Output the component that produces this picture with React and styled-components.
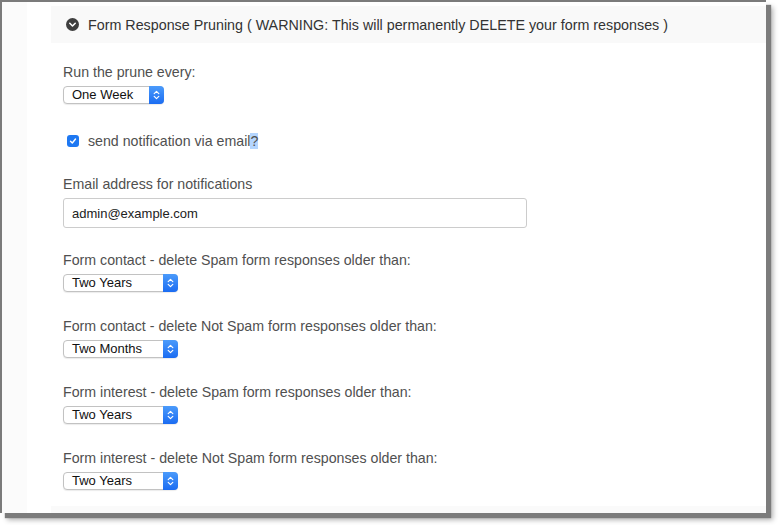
import React from "react";
import styled, { createGlobalStyle } from "styled-components";

const GlobalStyle = createGlobalStyle`
  html, body {
    margin: 0;
    padding: 0;
    background: #ffffff;
  }
  body {
    font-family: "Liberation Sans", Helvetica, Arial, sans-serif;
  }
`;

const Page = styled.div`
  width: 779px;
  height: 525px;
  background: #ffffff;
`;

const Window = styled.div`
  box-sizing: border-box;
  width: 766px;
  height: 513px;
  border-top: 2px solid #7b7b7b;
  border-left: 2px solid #7b7b7b;
  background: #ffffff;
  box-shadow: 5px 5px 1px #7c7c7c, 7px 7px 5px rgba(0, 0, 0, 0.3);
  display: flex;
  overflow: hidden;
`;

const Gutter = styled.div`
  width: 25px;
  flex-shrink: 0;
  background: #fbfbfb;
`;

const Main = styled.div`
  flex: 1;
  display: flex;
  flex-direction: column;
  padding: 4px 0 0 24px;
  min-width: 0;
`;

const PanelHeader = styled.div`
  display: flex;
  align-items: center;
  gap: 9px;
  height: 37px;
  flex-shrink: 0;
  padding-left: 15px;
  background: #f9f9f9;
  color: #333333;
  font-size: 14.3px;
`;

const ToggleIcon = styled.svg`
  width: 13px;
  height: 13px;
  display: block;
`;

const Body = styled.div`
  padding: 19px 0 16px 12px;
  display: flex;
  flex-direction: column;
`;

const Field = styled.div`
  display: flex;
  flex-direction: column;
  align-items: flex-start;
  gap: 4px;
  margin-top: ${(p) => p.$top || 0}px;
`;

const Label = styled.label`
  font-size: 14.2px;
  line-height: 20px;
  color: #505050;
`;

const SelectBox = styled.div`
  box-sizing: border-box;
  width: ${(p) => p.$width}px;
  height: 18px;
  display: flex;
  border: 1px solid #c2c2c2;
  border-radius: 4px;
  background: #ffffff;
  box-shadow: 0 1px 1px rgba(0, 0, 0, 0.08);
`;

const SelectValue = styled.span`
  flex: 1;
  padding-left: 8px;
  font-size: 13px;
  line-height: 16px;
  color: #111;
`;

const Stepper = styled.span`
  width: 15px;
  margin: -1px -1px -1px 0;
  border-radius: 0 4px 4px 0;
  background: linear-gradient(#4b9bfb, #1b6cf2);
  display: flex;
  align-items: center;
  justify-content: center;
`;

const CheckRow = styled.div`
  display: flex;
  align-items: center;
  gap: 9px;
  height: 20px;
  padding-left: 4px;
  margin-top: ${(p) => p.$top || 0}px;
  font-size: 14.2px;
  color: #505050;
`;

const CheckBox = styled.span`
  width: 12px;
  height: 12px;
  border-radius: 3px;
  background: #1e78f2;
  display: flex;
  align-items: center;
  justify-content: center;
`;

const Highlight = styled.span`
  background: #b4d5fe;
`;

const TextInput = styled.div`
  box-sizing: border-box;
  width: 464px;
  height: 30px;
  display: flex;
  align-items: center;
  padding-left: 8px;
  border: 1px solid #cccccc;
  border-radius: 3px;
  font-size: 13px;
  color: #222;
`;

const NextPanel = styled.div`
  height: 37px;
  flex-shrink: 0;
  background: #fafafa;
`;

const Select = ({ value, width }) => (
  <SelectBox $width={width}>
    <SelectValue>{value}</SelectValue>
    <Stepper>
      <svg width="7" height="10" viewBox="0 0 7 10">
        <path d="M1.2 3.6 L3.5 1.4 L5.8 3.6 M1.2 6.4 L3.5 8.6 L5.8 6.4" fill="none" stroke="#fff" strokeWidth="1.2" strokeLinecap="round" strokeLinejoin="round" />
      </svg>
    </Stepper>
  </SelectBox>
);

const rules = [
  { label: "Form contact - delete Spam form responses older than:", value: "Two Years", top: 22 },
  { label: "Form contact - delete Not Spam form responses older than:", value: "Two Months", top: 24 },
  { label: "Form interest - delete Spam form responses older than:", value: "Two Years", top: 24 },
  { label: "Form interest - delete Not Spam form responses older than:", value: "Two Years", top: 24 },
];

export default function App() {
  return (
    <Page>
      <GlobalStyle />
      <Window>
        <Gutter />
        <Main>
          <PanelHeader>
            <ToggleIcon viewBox="0 0 13 13">
              <circle cx="6.5" cy="6.5" r="6.5" fill="#3f3f3f" />
              <path d="M3.8 5.3 L6.5 8 L9.2 5.3" fill="none" stroke="#fff" strokeWidth="1.6" strokeLinecap="round" strokeLinejoin="round" />
            </ToggleIcon>
            <span>Form Response Pruning ( WARNING: This will permanently DELETE your form responses )</span>
          </PanelHeader>
          <Body>
            <Field>
              <Label>Run the prune every:</Label>
              <Select value="One Week" width={101} />
            </Field>

            <CheckRow $top={27}>
              <CheckBox>
                <svg width="8" height="8" viewBox="0 0 8 8">
                  <path d="M1.5 4.2 L3.3 6 L6.5 2" fill="none" stroke="#fff" strokeWidth="1.4" strokeLinecap="round" strokeLinejoin="round" />
                </svg>
              </CheckBox>
              <span>
                send notification via email<Highlight>?</Highlight>
              </span>
            </CheckRow>

            <Field $top={23}>
              <Label>Email address for notifications</Label>
              <TextInput>admin@example.com</TextInput>
            </Field>

            {rules.map((r) => (
              <Field key={r.label} $top={r.top}>
                <Label>{r.label}</Label>
                <Select value={r.value} width={115} />
              </Field>
            ))}
          </Body>
          <NextPanel />
        </Main>
      </Window>
    </Page>
  );
}
